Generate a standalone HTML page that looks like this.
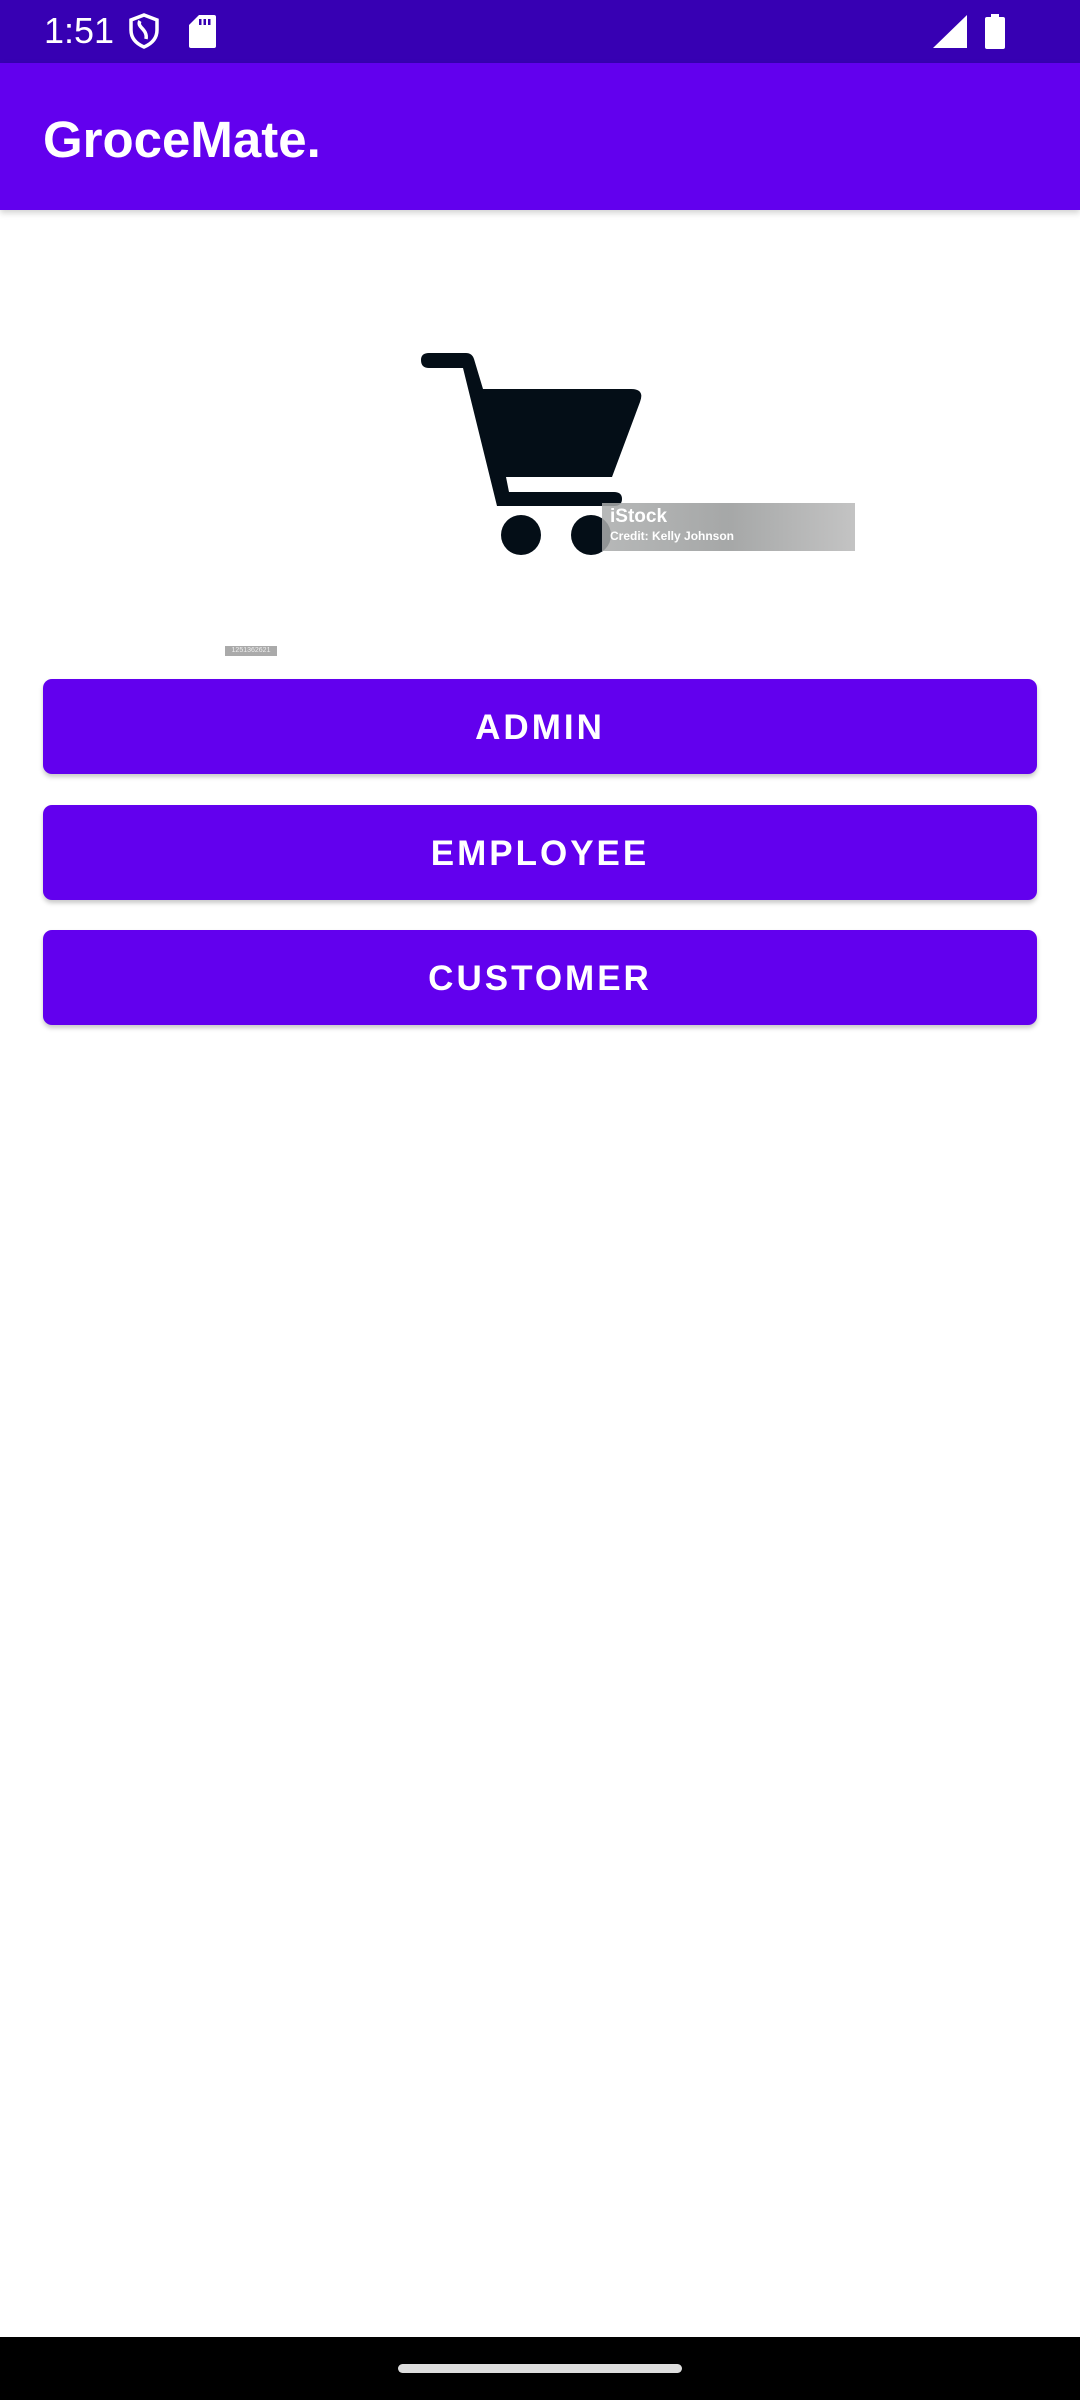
<!DOCTYPE html>
<html><head><meta charset="utf-8">
<style>
*{margin:0;padding:0;box-sizing:border-box}
html,body{width:1080px;height:2400px;background:#fff;overflow:hidden;font-family:"Liberation Sans",sans-serif;position:relative}
.sb{position:absolute;left:0;top:0;width:1080px;height:63px;background:#3700B3}
.time{position:absolute;left:44px;top:10px;color:#fff;font-size:36px}
.ab{position:absolute;left:0;top:63px;width:1080px;height:147px;background:#6200EE;box-shadow:0 3px 6px rgba(0,0,0,.18)}
.title{position:absolute;left:43px;top:47px;color:#fff;font-size:51px;font-weight:bold}
.btn{position:absolute;left:43px;width:994px;height:95px;background:#6200EE;border-radius:9px;color:#fff;font-size:35px;font-weight:bold;letter-spacing:3px;text-align:center;line-height:97px;box-shadow:0 3px 5px rgba(0,0,0,.22)}
.nav{position:absolute;left:0;top:2337px;width:1080px;height:63px;background:#000}
.pill{position:absolute;left:398px;top:27px;width:284px;height:9px;border-radius:5px;background:#ddd}
.wm{position:absolute;left:602px;top:503px;width:253px;height:48px;background:linear-gradient(90deg,rgba(170,172,172,.85),rgba(150,152,152,.85) 50%,rgba(185,185,185,.85));color:#fff}
.lbl{position:absolute;left:225px;top:646px;width:52px;height:10px;background:#aaa;color:#eee;font-size:7px;line-height:10px;text-align:center}
</style></head><body>
<div class="sb">
<div class="time">1:51</div>
<svg style="position:absolute;left:128px;top:13px" width="32" height="36" viewBox="0 0 32 36"><path d="M16 2 L29 7 V17 C29 26 23 31 16 34 C9 31 3 26 3 17 V7 Z" fill="none" stroke="#fff" stroke-width="3.5"/><path d="M12 8 C8 14 20 16 18 26" fill="none" stroke="#fff" stroke-width="3.5"/></svg>
<svg style="position:absolute;left:189px;top:15px" width="27" height="33" viewBox="0 0 27 33"><path d="M10 0 H25 Q27 0 27 2 V31 Q27 33 25 33 H2 Q0 33 0 31 V10 Z" fill="#fff"/><rect x="10" y="4" width="2.5" height="6" fill="#3700B3"/><rect x="14.5" y="4" width="2.5" height="6" fill="#3700B3"/><rect x="19" y="4" width="2.5" height="6" fill="#3700B3"/></svg>
<svg style="position:absolute;left:933px;top:15px" width="34" height="33" viewBox="0 0 34 33"><path d="M34 0 V33 H0 Z" fill="#fff"/></svg>
<svg style="position:absolute;left:985px;top:14px" width="20" height="35" viewBox="0 0 20 35"><rect x="6" y="0" width="8" height="4" fill="#fff"/><rect x="0" y="3" width="20" height="32" rx="2" fill="#fff"/></svg>
</div>
<div class="ab"><div class="title">GroceMate.</div></div>

<svg style="position:absolute;left:0;top:0" width="1080" height="700" viewBox="0 0 1080 700">
<path d="M429 353 H466 Q472 353 474 359 L483 389 H631 Q645 389 640 402 L612 477 H506 L509 492 H614 Q622 492 622 499 Q622 506 614 506 H497 L463 368 H429 Q421 368 421 360 Q421 353 429 353 Z" fill="#040e17"/>
<circle cx="521" cy="535" r="20" fill="#040e17"/>
<circle cx="591" cy="535" r="20" fill="#040e17"/>
</svg>
<div class="wm">
<div style="position:absolute;left:8px;top:3px;font-size:19px;font-weight:bold">iStock</div>
<div style="position:absolute;left:8px;top:26px;font-size:12px;font-weight:bold">Credit: Kelly Johnson</div>
</div>
<div class="lbl">1251362621</div>

<div class="btn" style="top:679px">ADMIN</div>
<div class="btn" style="top:805px">EMPLOYEE</div>
<div class="btn" style="top:930px">CUSTOMER</div>

<div class="nav"><div class="pill"></div></div>
</body></html>
